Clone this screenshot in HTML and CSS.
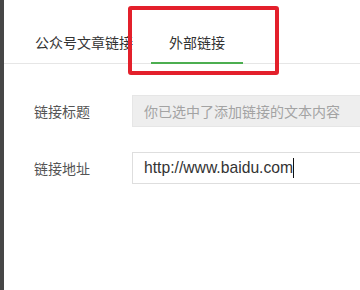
FILE: index.html
```html
<!DOCTYPE html>
<html lang="zh-CN">
<head>
  <meta charset="UTF-8">
  <meta name="viewport" content="width=device-width, initial-scale=1.0">
  <title>插入链接</title>
  <link rel="stylesheet" href="styles.css">
</head>
<body>

<div class="page">
  <div class="edge"></div>

  <div class="panel">
    <div class="tabs">
      <div class="tab">公众号文章链接</div>
      <div class="tab active">外部链接</div>
    </div>

    <div class="form">
      <div class="row">
        <div class="label">链接标题</div>
        <div class="field disabled">你已选中了添加链接的文本内容</div>
      </div>
      <div class="row">
        <div class="label">链接地址</div>
        <div class="field">http://www.baidu.com<span class="caret"></span></div>
      </div>
    </div>
  </div>

  <!-- red annotation box over the tab -->
  <div class="highlight"></div>
</div>

</body>
</html>
```

FILE: styles.css
```css
body {
  margin: 0;
  padding: 0;
  background-color: #fff;
  font-family: "Liberation Sans", "Noto Sans CJK SC", sans-serif;
  overflow: hidden;
}

.page {
  position: relative;
  display: flex;
  height: 290px;
}

.edge {
  flex-shrink: 0;
  width: 4px;
  background-color: #464646; /* dark window edge */
}

.panel {
  flex: 1;
  min-width: 0;
  background-color: #fff;
}

.tabs {
  display: flex;
  height: 63px;
  padding-left: 13px;
  border-bottom: 1px solid #e6e6e6;
}

.tab {
  padding: 33px 18px 9px;
  margin-bottom: -1px;
  font-size: 14px;
  line-height: 20px;
  color: #333;
  border-bottom: 2px solid transparent;
}

.tab.active {
  border-bottom-color: #4cae50; /* green underline */
}

.form {
  padding: 31px 0 0 30px;
  display: flex;
  flex-direction: column;
  gap: 25px;
}

.row {
  display: flex;
  align-items: center;
}

.label {
  flex-shrink: 0;
  width: 98px;
  font-size: 14px;
  color: #555;
}

/* fields run on past the right edge of the window */
.field {
  flex: 1;
  display: flex;
  align-items: center;
  height: 30px;
  padding-left: 11px;
  border: 1px solid #dedede;
  border-right: none;
  font-size: 15.7px;
  color: #333;
  white-space: nowrap;
  overflow: hidden;
}

.field.disabled {
  background-color: #eee;
  border-color: #e6e6e6;
  color: #a3a3a3;
  font-size: 14px;
}

.caret {
  display: inline-block;
  width: 1px;
  height: 20px;
  background-color: #111;
}

.highlight {
  position: absolute;
  left: 128px;
  top: 6px;
  width: 143px;
  height: 61px;
  border: 4px solid #e3202b;
  border-radius: 3px;
}
```
